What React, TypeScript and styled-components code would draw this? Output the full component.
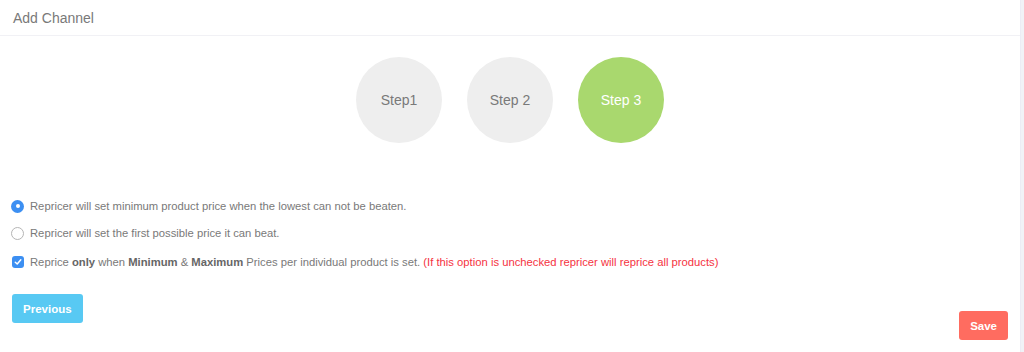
import { createGlobalStyle } from 'styled-components';
import styled from 'styled-components';

const GlobalStyle = createGlobalStyle`
  html, body {
    margin: 0;
    padding: 0;
    background: #f1f2f7;
    font-family: 'Liberation Sans', Arial, sans-serif;
    color: #797979;
  }
`;

const Panel = styled.section`
  width: 1021px;
  height: 352px;
  background: #fff;
  border-right: 1px solid #ececf5;
  box-sizing: border-box;
  display: flex;
  flex-direction: column;
`;

const PanelHeading = styled.header`
  height: 36px;
  box-sizing: border-box;
  display: flex;
  align-items: center;
  padding: 0 13px;
  border-bottom: 1px solid #f1f1f5;
  font-size: 14px;
  color: #797979;
`;

const Body = styled.div`
  display: flex;
  flex-direction: column;
  padding: 0 12px;
`;

const Steps = styled.div`
  display: flex;
  justify-content: center;
  gap: 25px;
  margin-top: 21px;
`;

const StepCircle = styled.div<{ $active?: boolean }>`
  width: 86px;
  height: 86px;
  border-radius: 50%;
  display: flex;
  align-items: center;
  justify-content: center;
  font-size: 14px;
  background: ${(p) => (p.$active ? '#a9d86e' : '#eeeeee')};
  color: ${(p) => (p.$active ? '#fff' : '#797979')};
`;

const Options = styled.div`
  display: flex;
  flex-direction: column;
  gap: 11px;
  margin-top: 55px;
`;

const Option = styled.label<{ $spaced?: boolean }>`
  display: flex;
  align-items: center;
  gap: 6px;
  height: 16px;
  margin-top: ${(p) => (p.$spaced ? 2 : 0)}px;
  font-size: 11.25px;
  color: #797979;
  b {
    color: #666;
  }
`;

const Radio = styled.span<{ $checked?: boolean }>`
  width: 13px;
  height: 13px;
  margin-left: -1px;
  border-radius: 50%;
  box-sizing: border-box;
  border: ${(p) => (p.$checked ? 'none' : '1px solid #b5b5b5')};
  background: ${(p) => (p.$checked ? '#3c8ff2' : '#fff')};
  display: flex;
  align-items: center;
  justify-content: center;
  &::after {
    content: '';
    display: ${(p) => (p.$checked ? 'block' : 'none')};
    width: 4px;
    height: 4px;
    border-radius: 50%;
    background: #fff;
  }
`;

const Check = styled.span`
  width: 12px;
  height: 12px;
  border-radius: 3px;
  background: #3c8ff2;
  display: flex;
  align-items: center;
  justify-content: center;
`;

const Warning = styled.span`
  color: #f5333f;
`;

const Footer = styled.div`
  display: flex;
  justify-content: space-between;
  align-items: flex-start;
  margin-top: 24px;
`;

const Button = styled.button<{ $tone: 'info' | 'danger'; $offset?: number }>`
  border: none;
  border-radius: 3px;
  height: 29px;
  padding: 0 11px;
  font-family: inherit;
  font-size: 11.5px;
  font-weight: bold;
  color: #fff;
  background: ${(p) => (p.$tone === 'info' ? '#58c9f3' : '#ff6c60')};
  margin-top: ${(p) => p.$offset ?? 0}px;
  cursor: pointer;
`;

export default function App() {
  return (
    <>
      <GlobalStyle />
      <Panel>
        <PanelHeading>Add Channel</PanelHeading>
        <Body>
          <Steps>
            <StepCircle>Step1</StepCircle>
            <StepCircle>Step 2</StepCircle>
            <StepCircle $active>Step 3</StepCircle>
          </Steps>

          <Options>
            <Option>
              <Radio $checked />
              Repricer will set minimum product price when the lowest can not be beaten.
            </Option>
            <Option>
              <Radio />
              Repricer will set the first possible price it can beat.
            </Option>
            <Option $spaced>
              <Check>
                <svg width="8" height="8" viewBox="0 0 8 8">
                  <path d="M1.3 4.2 L3.2 6 L6.8 1.8" fill="none" stroke="#fff" strokeWidth="1.5" strokeLinecap="round" strokeLinejoin="round" />
                </svg>
              </Check>
              <span>
                Reprice <b>only</b> when <b>Minimum</b> &amp; <b>Maximum</b> Prices per individual product is set.{' '}
                <Warning>(If this option is unchecked repricer will reprice all products)</Warning>
              </span>
            </Option>
          </Options>

          <Footer>
            <Button $tone="info">Previous</Button>
            <Button $tone="danger" $offset={17}>Save</Button>
          </Footer>
        </Body>
      </Panel>
    </>
  );
}
